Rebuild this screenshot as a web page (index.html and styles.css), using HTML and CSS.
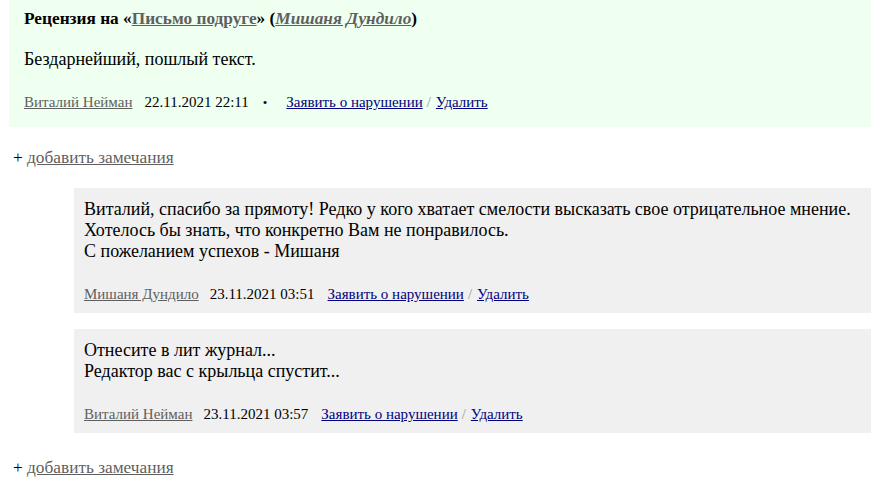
FILE: index.html
```html
<!DOCTYPE html>
<html lang="ru">
<head>
<meta charset="utf-8">
<title>Рецензия</title>
<link rel="stylesheet" href="styles.css">
</head>
<body>
<div class="page">
  <div class="review">
    <div class="review-title">Рецензия на «<a class="gray" href="#">Письмо подруге</a>» (<a class="gray author" href="#">Мишаня Дундило</a>)</div>
    <div class="review-text">Бездарнейший, пошлый текст.</div>
    <div class="meta">
      <a class="gray" href="#">Виталий Нейман</a><span class="date">22.11.2021 22:11</span><span class="bullet">•</span><a class="blue first-action" href="#">Заявить о нарушении</a><span class="slash">/</span><a class="blue" href="#">Удалить</a>
    </div>
  </div>

  <div class="add">+ <a class="gray" href="#">добавить замечания</a></div>

  <div class="replies">
    <div class="reply">
      <div class="reply-text">Виталий, спасибо за прямоту! Редко у кого хватает смелости высказать свое отрицательное мнение.<br>Хотелось бы знать, что конкретно Вам не понравилось.<br>С пожеланием успехов - Мишаня</div>
      <div class="meta">
        <a class="gray" href="#">Мишаня Дундило</a><span class="date">23.11.2021 03:51</span><a class="blue reply-action" href="#">Заявить о нарушении</a><span class="slash">/</span><a class="blue" href="#">Удалить</a>
      </div>
    </div>
    <div class="reply">
      <div class="reply-text">Отнесите в лит журнал...<br>Редактор вас с крыльца спустит...</div>
      <div class="meta">
        <a class="gray" href="#">Виталий Нейман</a><span class="date">23.11.2021 03:57</span><a class="blue reply-action" href="#">Заявить о нарушении</a><span class="slash">/</span><a class="blue" href="#">Удалить</a>
      </div>
    </div>
  </div>

  <div class="add add-last">+ <a class="gray" href="#">добавить замечания</a></div>
</div>
</body>
</html>
```

FILE: styles.css
```css
html, body {
  margin: 0;
  padding: 0;
  background: #ffffff;
}

body {
  font-family: "Liberation Serif", "Times New Roman", serif;
  font-size: 18px;
  line-height: 21px;
  color: #000000;
}

.page {
  padding-left: 9px;
}

a.gray {
  color: #5f5f5f;
  text-decoration: underline;
}

a.blue {
  color: #000080;
  text-decoration: underline;
}

.review {
  background: #effff0;
  padding: 8px 0 16px 15px;
}

.review-title {
  font-weight: bold;
  font-size: 17.3px;
}

.review-title .author {
  font-style: italic;
}

.review-text {
  margin-top: 20px;
}

.meta {
  font-size: 15px;
  line-height: 17px;
  margin-top: 24px;
  white-space: nowrap;
}

.date {
  margin-left: 12px;
}

.reply .date {
  margin-left: 11px;
}

.bullet {
  margin-left: 14px;
  font-size: 13px;
}

.first-action {
  margin-left: 19px;
}

.reply-action {
  margin-left: 13px;
}

.slash {
  color: #999999;
  margin: 0 5px 0 4px;
}

.add {
  margin: 20px 0 20px 4px;
  font-size: 17.3px;
}

.add-last {
  margin-top: 24px;
}

.replies {
  margin-left: 65px;
  display: flex;
  flex-direction: column;
  gap: 16px;
}

.reply {
  background: #f0f0f0;
  padding: 11px 10px 10px 10px;
}

.reply .meta {
  margin-top: 24px;
}
```
